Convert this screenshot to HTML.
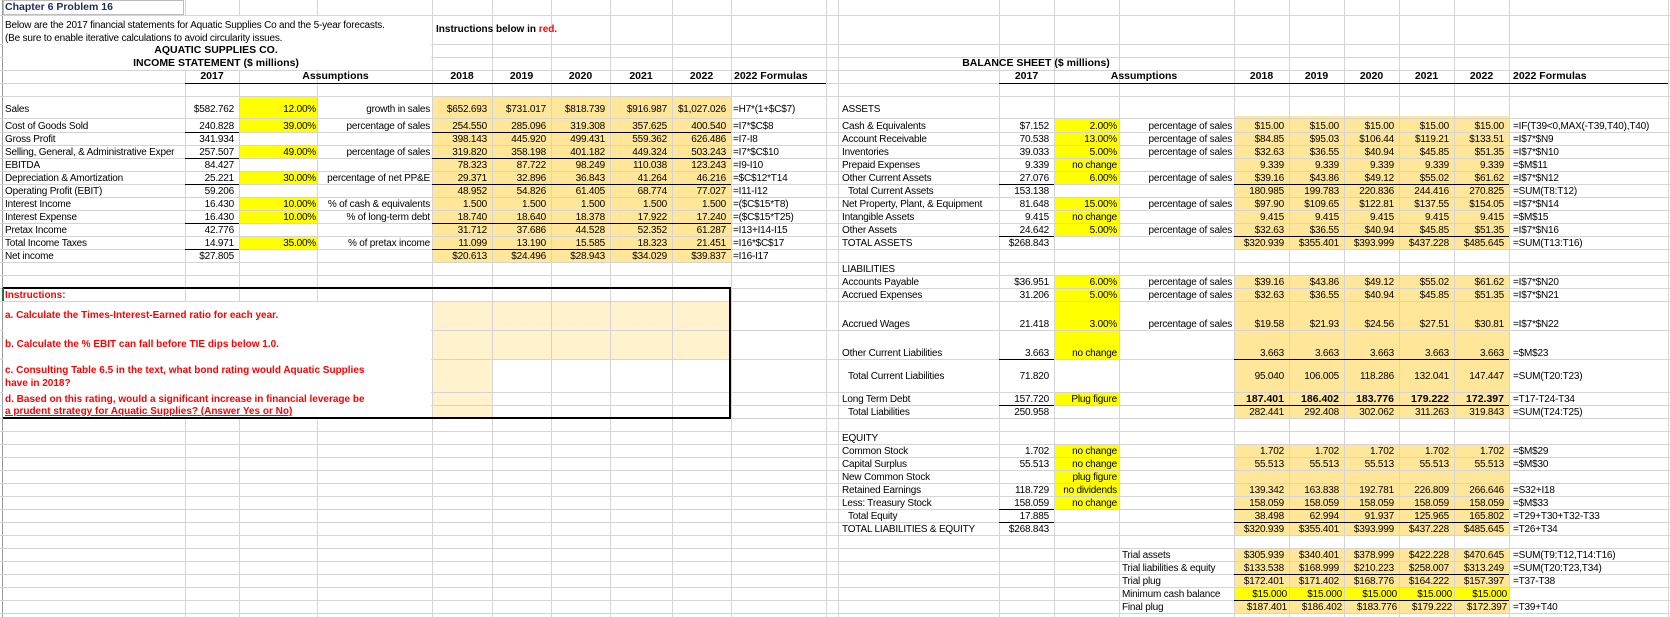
<!DOCTYPE html>
<html><head><meta charset="utf-8">
<style>
*{margin:0;padding:0;box-sizing:border-box}
body{width:1670px;height:617px;overflow:hidden;background:#fff;position:relative;font-family:"Liberation Sans",sans-serif;font-size:10px;letter-spacing:-0.2px;color:#000}
.v{position:absolute;top:0;width:1px;height:617px;background:#d4d4d4}
.h{position:absolute;left:0;width:1670px;height:1px;background:#d4d4d4}
.f{position:absolute}
.u{position:absolute;height:1px;background:#000}
.c{position:absolute;height:13px;line-height:13px;white-space:nowrap}
.b{font-weight:bold}
.hd{font-weight:bold;font-size:10.5px;letter-spacing:0}
.red{color:#f00;font-weight:bold;font-size:10px;letter-spacing:0}
.Y{background:#ffff00}.T{background:#ffe699}.L{background:#fff2cc}
</style></head><body>
<!-- fills -->
<div class="f T" style="left:432px;top:96px;width:299px;height:166px"></div>
<div class="f Y" style="left:239px;top:96px;width:78px;height:36px"></div>
<div class="f Y" style="left:239px;top:145px;width:78px;height:13px"></div>
<div class="f Y" style="left:239px;top:171px;width:78px;height:13px"></div>
<div class="f Y" style="left:239px;top:197px;width:78px;height:26px"></div>
<div class="f Y" style="left:239px;top:236px;width:78px;height:13px"></div>
<div class="f L" style="left:432px;top:301px;width:298px;height:58px"></div>
<div class="f L" style="left:432px;top:359px;width:60px;height:59px"></div>
<div class="f Y" style="left:1054px;top:118px;width:65px;height:66px"></div>
<div class="f Y" style="left:1054px;top:197px;width:65px;height:39px"></div>
<div class="f Y" style="left:1054px;top:275px;width:65px;height:84px"></div>
<div class="f Y" style="left:1054px;top:392px;width:65px;height:13px"></div>
<div class="f Y" style="left:1054px;top:444px;width:65px;height:65px"></div>
<div class="f T" style="left:1234px;top:116px;width:275px;height:133px"></div>
<div class="f T" style="left:1234px;top:275px;width:275px;height:143px"></div>
<div class="f T" style="left:1234px;top:444px;width:275px;height:91px"></div>
<div class="f T" style="left:1234px;top:548px;width:275px;height:65px"></div>
<div class="f Y" style="left:1234px;top:587px;width:275px;height:13px"></div>
<!-- vertical grid -->
<div class="v" style="left:2px;background:#9a9a9a"></div>
<div class="v" style="left:185px"></div><div class="v" style="left:239px"></div><div class="v" style="left:317px"></div>
<div class="v" style="left:432px"></div><div class="v" style="left:492px"></div><div class="v" style="left:551px"></div>
<div class="v" style="left:610px"></div><div class="v" style="left:672px"></div><div class="v" style="left:731px"></div>
<div class="v" style="left:826px"></div><div class="v" style="left:838px"></div><div class="v" style="left:999px"></div>
<div class="v" style="left:1054px"></div><div class="v" style="left:1119px"></div><div class="v" style="left:1234px"></div>
<div class="v" style="left:1289px"></div><div class="v" style="left:1344px"></div><div class="v" style="left:1399px"></div>
<div class="v" style="left:1454px"></div><div class="v" style="left:1509px"></div><div class="v" style="left:1668px"></div>
<!-- horizontal grid -->
<div class="h" style="top:15px"></div><div class="h" style="top:44px"></div><div class="h" style="top:57px"></div>
<div class="h" style="top:70px"></div><div class="h" style="top:83px"></div><div class="h" style="top:96px"></div>
<div class="h" style="top:118px"></div><div class="h" style="top:132px"></div><div class="h" style="top:145px"></div>
<div class="h" style="top:158px"></div><div class="h" style="top:171px"></div><div class="h" style="top:184px"></div>
<div class="h" style="top:197px"></div><div class="h" style="top:210px"></div><div class="h" style="top:223px"></div>
<div class="h" style="top:236px"></div><div class="h" style="top:249px"></div><div class="h" style="top:262px"></div>
<div class="h" style="top:275px"></div><div class="h" style="top:288px"></div><div class="h" style="top:301px"></div>
<div class="h" style="top:330px"></div><div class="h" style="top:359px"></div><div class="h" style="top:392px"></div>
<div class="h" style="top:405px"></div><div class="h" style="top:418px"></div><div class="h" style="top:431px"></div>
<div class="h" style="top:444px"></div><div class="h" style="top:457px"></div><div class="h" style="top:470px"></div>
<div class="h" style="top:483px"></div><div class="h" style="top:496px"></div><div class="h" style="top:509px"></div>
<div class="h" style="top:522px"></div><div class="h" style="top:535px"></div><div class="h" style="top:548px"></div>
<div class="h" style="top:561px"></div><div class="h" style="top:574px"></div><div class="h" style="top:587px"></div>
<div class="h" style="top:600px"></div><div class="h" style="top:613px"></div>
<!-- covers for overflowing text -->
<div class="f" style="left:3px;top:16px;width:428px;height:54px;background:#fff"></div>
<div class="f" style="left:3px;top:302px;width:428px;height:116px;background:#fff"></div>
<div class="f" style="left:3px;top:289px;width:181px;height:12px;background:#fff"></div>
<div class="f" style="left:3px;top:0px;width:181px;height:15px;background:#fff;border:1px solid #bbb"></div>
<!-- black underlines -->
<div class="u" style="left:185px;top:83px;width:641px"></div>
<div class="u" style="left:999px;top:83px;width:669px"></div>
<div class="u" style="left:185px;top:132px;width:54px"></div><div class="u" style="left:432px;top:132px;width:299px"></div>
<div class="u" style="left:185px;top:158px;width:54px"></div><div class="u" style="left:432px;top:158px;width:299px"></div>
<div class="u" style="left:185px;top:184px;width:54px"></div><div class="u" style="left:432px;top:184px;width:299px"></div>
<div class="u" style="left:185px;top:223px;width:54px"></div><div class="u" style="left:432px;top:223px;width:299px"></div>
<div class="u" style="left:185px;top:249px;width:54px"></div><div class="u" style="left:432px;top:249px;width:299px"></div>
<div class="u" style="left:999px;top:184px;width:55px"></div><div class="u" style="left:1234px;top:184px;width:275px"></div>
<div class="u" style="left:999px;top:236px;width:55px"></div><div class="u" style="left:1234px;top:236px;width:275px"></div>
<div class="u" style="left:999px;top:359px;width:55px"></div><div class="u" style="left:1234px;top:359px;width:275px"></div>
<div class="u" style="left:999px;top:405px;width:55px"></div><div class="u" style="left:1234px;top:405px;width:275px"></div>
<div class="u" style="left:999px;top:509px;width:55px"></div><div class="u" style="left:1234px;top:509px;width:275px"></div>
<div class="u" style="left:999px;top:522px;width:55px"></div><div class="u" style="left:1234px;top:522px;width:275px"></div>
<div class="u" style="left:1234px;top:574px;width:275px"></div><div class="u" style="left:1234px;top:600px;width:275px"></div>
<!-- instructions box -->
<div class="f" style="left:3px;top:287px;width:728px;height:132px;border:2px solid #000;border-left:none"></div>
<div class="f" style="left:2px;top:288px;width:2px;height:13px;background:#217346"></div>

<!-- titles -->
<div class="c b" style="left:5px;top:1px;color:#1f2d5a;font-size:10.5px;letter-spacing:0">Chapter 6 Problem 16</div>
<div class="c" style="left:5px;top:19px">Below are the 2017 financial statements for Aquatic Supplies Co and the 5-year forecasts.</div>
<div class="c" style="left:5px;top:32px">(Be sure to enable iterative calculations to avoid circularity issues.</div>
<div class="c b" style="left:436px;top:23px;letter-spacing:0">Instructions below in <span style="color:#f00">red.</span></div>
<div class="c hd" style="left:0;width:432px;text-align:center;top:44px">AQUATIC SUPPLIES CO.</div>
<div class="c hd" style="left:0;width:432px;text-align:center;top:57px">INCOME STATEMENT ($ millions)</div>
<div class="c hd" style="left:185px;width:54px;text-align:center;top:70px">2017</div>
<div class="c hd" style="left:239px;width:193px;text-align:center;top:70px">Assumptions</div>
<div class="c hd" style="left:432px;width:60px;text-align:center;top:70px">2018</div>
<div class="c hd" style="left:492px;width:59px;text-align:center;top:70px">2019</div>
<div class="c hd" style="left:551px;width:59px;text-align:center;top:70px">2020</div>
<div class="c hd" style="left:610px;width:62px;text-align:center;top:70px">2021</div>
<div class="c hd" style="left:672px;width:59px;text-align:center;top:70px">2022</div>
<div class="c hd" style="left:734px;top:70px">2022 Formulas</div>
<div class="c hd" style="left:838px;width:396px;text-align:center;top:57px">BALANCE SHEET ($ millions)</div>
<div class="c hd" style="left:999px;width:55px;text-align:center;top:70px">2017</div>
<div class="c hd" style="left:1054px;width:180px;text-align:center;top:70px">Assumptions</div>
<div class="c hd" style="left:1234px;width:55px;text-align:center;top:70px">2018</div>
<div class="c hd" style="left:1289px;width:55px;text-align:center;top:70px">2019</div>
<div class="c hd" style="left:1344px;width:55px;text-align:center;top:70px">2020</div>
<div class="c hd" style="left:1399px;width:55px;text-align:center;top:70px">2021</div>
<div class="c hd" style="left:1454px;width:55px;text-align:center;top:70px">2022</div>
<div class="c hd" style="left:1513px;top:70px">2022 Formulas</div>

<!-- income statement rows -->
<div class="c" style="left:5px;top:103px">Sales</div><div class="c" style="right:1436px;top:103px">$582.762</div><div class="c" style="right:1354px;top:103px">12.00%</div><div class="c" style="right:1240px;top:103px">growth in sales</div><div class="c" style="right:1183px;top:103px">$652.693</div><div class="c" style="right:1124px;top:103px">$731.017</div><div class="c" style="right:1065px;top:103px">$818.739</div><div class="c" style="right:1003px;top:103px">$916.987</div><div class="c" style="right:944px;top:103px">$1,027.026</div><div class="c" style="left:733px;top:103px">=H7*(1+$C$7)</div>
<div class="c" style="left:5px;top:120px">Cost of Goods Sold</div><div class="c" style="right:1436px;top:120px">240.828</div><div class="c" style="right:1354px;top:120px">39.00%</div><div class="c" style="right:1240px;top:120px">percentage of sales</div><div class="c" style="right:1183px;top:120px">254.550</div><div class="c" style="right:1124px;top:120px">285.096</div><div class="c" style="right:1065px;top:120px">319.308</div><div class="c" style="right:1003px;top:120px">357.625</div><div class="c" style="right:944px;top:120px">400.540</div><div class="c" style="left:733px;top:120px">=I7*$C$8</div>
<div class="c" style="left:5px;top:133px">Gross Profit</div><div class="c" style="right:1436px;top:133px">341.934</div><div class="c" style="right:1183px;top:133px">398.143</div><div class="c" style="right:1124px;top:133px">445.920</div><div class="c" style="right:1065px;top:133px">499.431</div><div class="c" style="right:1003px;top:133px">559.362</div><div class="c" style="right:944px;top:133px">626.486</div><div class="c" style="left:733px;top:133px">=I7-I8</div>
<div class="c" style="left:5px;top:146px;width:180px;overflow:hidden">Selling, General, &amp; Administrative Exper</div><div class="c" style="right:1436px;top:146px">257.507</div><div class="c" style="right:1354px;top:146px">49.00%</div><div class="c" style="right:1240px;top:146px">percentage of sales</div><div class="c" style="right:1183px;top:146px">319.820</div><div class="c" style="right:1124px;top:146px">358.198</div><div class="c" style="right:1065px;top:146px">401.182</div><div class="c" style="right:1003px;top:146px">449.324</div><div class="c" style="right:944px;top:146px">503.243</div><div class="c" style="left:733px;top:146px">=I7*$C$10</div>
<div class="c" style="left:5px;top:159px">EBITDA</div><div class="c" style="right:1436px;top:159px">84.427</div><div class="c" style="right:1183px;top:159px">78.323</div><div class="c" style="right:1124px;top:159px">87.722</div><div class="c" style="right:1065px;top:159px">98.249</div><div class="c" style="right:1003px;top:159px">110.038</div><div class="c" style="right:944px;top:159px">123.243</div><div class="c" style="left:733px;top:159px">=I9-I10</div>
<div class="c" style="left:5px;top:172px">Depreciation &amp; Amortization</div><div class="c" style="right:1436px;top:172px">25.221</div><div class="c" style="right:1354px;top:172px">30.00%</div><div class="c" style="right:1240px;top:172px">percentage of net PP&amp;E</div><div class="c" style="right:1183px;top:172px">29.371</div><div class="c" style="right:1124px;top:172px">32.896</div><div class="c" style="right:1065px;top:172px">36.843</div><div class="c" style="right:1003px;top:172px">41.264</div><div class="c" style="right:944px;top:172px">46.216</div><div class="c" style="left:733px;top:172px">=$C$12*T14</div>
<div class="c" style="left:5px;top:185px">Operating Profit (EBIT)</div><div class="c" style="right:1436px;top:185px">59.206</div><div class="c" style="right:1183px;top:185px">48.952</div><div class="c" style="right:1124px;top:185px">54.826</div><div class="c" style="right:1065px;top:185px">61.405</div><div class="c" style="right:1003px;top:185px">68.774</div><div class="c" style="right:944px;top:185px">77.027</div><div class="c" style="left:733px;top:185px">=I11-I12</div>
<div class="c" style="left:5px;top:198px">Interest Income</div><div class="c" style="right:1436px;top:198px">16.430</div><div class="c" style="right:1354px;top:198px">10.00%</div><div class="c" style="right:1240px;top:198px">% of cash &amp; equivalents</div><div class="c" style="right:1183px;top:198px">1.500</div><div class="c" style="right:1124px;top:198px">1.500</div><div class="c" style="right:1065px;top:198px">1.500</div><div class="c" style="right:1003px;top:198px">1.500</div><div class="c" style="right:944px;top:198px">1.500</div><div class="c" style="left:733px;top:198px">=($C$15*T8)</div>
<div class="c" style="left:5px;top:211px">Interest Expense</div><div class="c" style="right:1436px;top:211px">16.430</div><div class="c" style="right:1354px;top:211px">10.00%</div><div class="c" style="right:1240px;top:211px">% of long-term debt</div><div class="c" style="right:1183px;top:211px">18.740</div><div class="c" style="right:1124px;top:211px">18.640</div><div class="c" style="right:1065px;top:211px">18.378</div><div class="c" style="right:1003px;top:211px">17.922</div><div class="c" style="right:944px;top:211px">17.240</div><div class="c" style="left:733px;top:211px">=($C$15*T25)</div>
<div class="c" style="left:5px;top:224px">Pretax Income</div><div class="c" style="right:1436px;top:224px">42.776</div><div class="c" style="right:1183px;top:224px">31.712</div><div class="c" style="right:1124px;top:224px">37.686</div><div class="c" style="right:1065px;top:224px">44.528</div><div class="c" style="right:1003px;top:224px">52.352</div><div class="c" style="right:944px;top:224px">61.287</div><div class="c" style="left:733px;top:224px">=I13+I14-I15</div>
<div class="c" style="left:5px;top:237px">Total Income Taxes</div><div class="c" style="right:1436px;top:237px">14.971</div><div class="c" style="right:1354px;top:237px">35.00%</div><div class="c" style="right:1240px;top:237px">% of pretax income</div><div class="c" style="right:1183px;top:237px">11.099</div><div class="c" style="right:1124px;top:237px">13.190</div><div class="c" style="right:1065px;top:237px">15.585</div><div class="c" style="right:1003px;top:237px">18.323</div><div class="c" style="right:944px;top:237px">21.451</div><div class="c" style="left:733px;top:237px">=I16*$C$17</div>
<div class="c" style="left:5px;top:250px">Net income</div><div class="c" style="right:1436px;top:250px">$27.805</div><div class="c" style="right:1183px;top:250px">$20.613</div><div class="c" style="right:1124px;top:250px">$24.496</div><div class="c" style="right:1065px;top:250px">$28.943</div><div class="c" style="right:1003px;top:250px">$34.029</div><div class="c" style="right:944px;top:250px">$39.837</div><div class="c" style="left:733px;top:250px">=I16-I17</div>

<!-- instructions -->
<div class="c red" style="left:5px;top:289px">Instructions:</div>
<div class="c red" style="left:5px;top:309px">a. Calculate the Times-Interest-Earned ratio for each year.</div>
<div class="c red" style="left:5px;top:338px">b. Calculate the % EBIT can fall before TIE dips below 1.0.</div>
<div class="c red" style="left:5px;top:364px">c. Consulting Table 6.5 in the text, what bond rating would Aquatic Supplies</div>
<div class="c red" style="left:5px;top:377px">have in 2018?</div>
<div class="c red" style="left:5px;top:393px">d. Based on this rating, would a significant increase in financial leverage be</div>
<div class="c red" style="left:5px;top:405px;text-decoration:underline">a prudent strategy for Aquatic Supplies? (Answer Yes or No)</div>

<!-- balance sheet -->
<div class="c" style="left:842px;top:103px">ASSETS</div>
<div class="c" style="left:842px;top:120px">Cash &amp; Equivalents</div><div class="c" style="right:621px;top:120px">$7.152</div><div class="c" style="right:553px;top:120px">2.00%</div><div class="c" style="right:438px;top:120px">percentage of sales</div><div class="c" style="right:386px;top:120px">$15.00</div><div class="c" style="right:331px;top:120px">$15.00</div><div class="c" style="right:276px;top:120px">$15.00</div><div class="c" style="right:221px;top:120px">$15.00</div><div class="c" style="right:166px;top:120px">$15.00</div><div class="c" style="left:1513px;top:120px">=IF(T39&lt;0,MAX(-T39,T40),T40)</div>
<div class="c" style="left:842px;top:133px">Account Receivable</div><div class="c" style="right:621px;top:133px">70.538</div><div class="c" style="right:553px;top:133px">13.00%</div><div class="c" style="right:438px;top:133px">percentage of sales</div><div class="c" style="right:386px;top:133px">$84.85</div><div class="c" style="right:331px;top:133px">$95.03</div><div class="c" style="right:276px;top:133px">$106.44</div><div class="c" style="right:221px;top:133px">$119.21</div><div class="c" style="right:166px;top:133px">$133.51</div><div class="c" style="left:1513px;top:133px">=I$7*$N9</div>
<div class="c" style="left:842px;top:146px">Inventories</div><div class="c" style="right:621px;top:146px">39.033</div><div class="c" style="right:553px;top:146px">5.00%</div><div class="c" style="right:438px;top:146px">percentage of sales</div><div class="c" style="right:386px;top:146px">$32.63</div><div class="c" style="right:331px;top:146px">$36.55</div><div class="c" style="right:276px;top:146px">$40.94</div><div class="c" style="right:221px;top:146px">$45.85</div><div class="c" style="right:166px;top:146px">$51.35</div><div class="c" style="left:1513px;top:146px">=I$7*$N10</div>
<div class="c" style="left:842px;top:159px">Prepaid Expenses</div><div class="c" style="right:621px;top:159px">9.339</div><div class="c" style="right:553px;top:159px">no change</div><div class="c" style="right:386px;top:159px">9.339</div><div class="c" style="right:331px;top:159px">9.339</div><div class="c" style="right:276px;top:159px">9.339</div><div class="c" style="right:221px;top:159px">9.339</div><div class="c" style="right:166px;top:159px">9.339</div><div class="c" style="left:1513px;top:159px">=$M$11</div>
<div class="c" style="left:842px;top:172px">Other Current Assets</div><div class="c" style="right:621px;top:172px">27.076</div><div class="c" style="right:553px;top:172px">6.00%</div><div class="c" style="right:438px;top:172px">percentage of sales</div><div class="c" style="right:386px;top:172px">$39.16</div><div class="c" style="right:331px;top:172px">$43.86</div><div class="c" style="right:276px;top:172px">$49.12</div><div class="c" style="right:221px;top:172px">$55.02</div><div class="c" style="right:166px;top:172px">$61.62</div><div class="c" style="left:1513px;top:172px">=I$7*$N12</div>
<div class="c" style="left:848px;top:185px">Total Current Assets</div><div class="c" style="right:621px;top:185px">153.138</div><div class="c" style="right:386px;top:185px">180.985</div><div class="c" style="right:331px;top:185px">199.783</div><div class="c" style="right:276px;top:185px">220.836</div><div class="c" style="right:221px;top:185px">244.416</div><div class="c" style="right:166px;top:185px">270.825</div><div class="c" style="left:1513px;top:185px">=SUM(T8:T12)</div>
<div class="c" style="left:842px;top:198px">Net Property, Plant, &amp; Equipment</div><div class="c" style="right:621px;top:198px">81.648</div><div class="c" style="right:553px;top:198px">15.00%</div><div class="c" style="right:438px;top:198px">percentage of sales</div><div class="c" style="right:386px;top:198px">$97.90</div><div class="c" style="right:331px;top:198px">$109.65</div><div class="c" style="right:276px;top:198px">$122.81</div><div class="c" style="right:221px;top:198px">$137.55</div><div class="c" style="right:166px;top:198px">$154.05</div><div class="c" style="left:1513px;top:198px">=I$7*$N14</div>
<div class="c" style="left:842px;top:211px">Intangible Assets</div><div class="c" style="right:621px;top:211px">9.415</div><div class="c" style="right:553px;top:211px">no change</div><div class="c" style="right:386px;top:211px">9.415</div><div class="c" style="right:331px;top:211px">9.415</div><div class="c" style="right:276px;top:211px">9.415</div><div class="c" style="right:221px;top:211px">9.415</div><div class="c" style="right:166px;top:211px">9.415</div><div class="c" style="left:1513px;top:211px">=$M$15</div>
<div class="c" style="left:842px;top:224px">Other Assets</div><div class="c" style="right:621px;top:224px">24.642</div><div class="c" style="right:553px;top:224px">5.00%</div><div class="c" style="right:438px;top:224px">percentage of sales</div><div class="c" style="right:386px;top:224px">$32.63</div><div class="c" style="right:331px;top:224px">$36.55</div><div class="c" style="right:276px;top:224px">$40.94</div><div class="c" style="right:221px;top:224px">$45.85</div><div class="c" style="right:166px;top:224px">$51.35</div><div class="c" style="left:1513px;top:224px">=I$7*$N16</div>
<div class="c" style="left:842px;top:237px">TOTAL ASSETS</div><div class="c" style="right:621px;top:237px">$268.843</div><div class="c" style="right:386px;top:237px">$320.939</div><div class="c" style="right:331px;top:237px">$355.401</div><div class="c" style="right:276px;top:237px">$393.999</div><div class="c" style="right:221px;top:237px">$437.228</div><div class="c" style="right:166px;top:237px">$485.645</div><div class="c" style="left:1513px;top:237px">=SUM(T13:T16)</div>

<div class="c" style="left:842px;top:263px">LIABILITIES</div>
<div class="c" style="left:842px;top:276px">Accounts Payable</div><div class="c" style="right:621px;top:276px">$36.951</div><div class="c" style="right:553px;top:276px">6.00%</div><div class="c" style="right:438px;top:276px">percentage of sales</div><div class="c" style="right:386px;top:276px">$39.16</div><div class="c" style="right:331px;top:276px">$43.86</div><div class="c" style="right:276px;top:276px">$49.12</div><div class="c" style="right:221px;top:276px">$55.02</div><div class="c" style="right:166px;top:276px">$61.62</div><div class="c" style="left:1513px;top:276px">=I$7*$N20</div>
<div class="c" style="left:842px;top:289px">Accrued Expenses</div><div class="c" style="right:621px;top:289px">31.206</div><div class="c" style="right:553px;top:289px">5.00%</div><div class="c" style="right:438px;top:289px">percentage of sales</div><div class="c" style="right:386px;top:289px">$32.63</div><div class="c" style="right:331px;top:289px">$36.55</div><div class="c" style="right:276px;top:289px">$40.94</div><div class="c" style="right:221px;top:289px">$45.85</div><div class="c" style="right:166px;top:289px">$51.35</div><div class="c" style="left:1513px;top:289px">=I$7*$N21</div>
<div class="c" style="left:842px;top:318px">Accrued Wages</div><div class="c" style="right:621px;top:318px">21.418</div><div class="c" style="right:553px;top:318px">3.00%</div><div class="c" style="right:438px;top:318px">percentage of sales</div><div class="c" style="right:386px;top:318px">$19.58</div><div class="c" style="right:331px;top:318px">$21.93</div><div class="c" style="right:276px;top:318px">$24.56</div><div class="c" style="right:221px;top:318px">$27.51</div><div class="c" style="right:166px;top:318px">$30.81</div><div class="c" style="left:1513px;top:318px">=I$7*$N22</div>
<div class="c" style="left:842px;top:347px">Other Current Liabilities</div><div class="c" style="right:621px;top:347px">3.663</div><div class="c" style="right:553px;top:347px">no change</div><div class="c" style="right:386px;top:347px">3.663</div><div class="c" style="right:331px;top:347px">3.663</div><div class="c" style="right:276px;top:347px">3.663</div><div class="c" style="right:221px;top:347px">3.663</div><div class="c" style="right:166px;top:347px">3.663</div><div class="c" style="left:1513px;top:347px">=$M$23</div>
<div class="c" style="left:848px;top:370px">Total Current Liabilities</div><div class="c" style="right:621px;top:370px">71.820</div><div class="c" style="right:386px;top:370px">95.040</div><div class="c" style="right:331px;top:370px">106.005</div><div class="c" style="right:276px;top:370px">118.286</div><div class="c" style="right:221px;top:370px">132.041</div><div class="c" style="right:166px;top:370px">147.447</div><div class="c" style="left:1513px;top:370px">=SUM(T20:T23)</div>
<div class="c" style="left:842px;top:393px">Long Term Debt</div><div class="c" style="right:621px;top:393px">157.720</div><div class="c" style="right:553px;top:393px">Plug figure</div><div class="c b" style="right:386px;top:393px;font-size:10.5px;letter-spacing:0">187.401</div><div class="c b" style="right:331px;top:393px;font-size:10.5px;letter-spacing:0">186.402</div><div class="c b" style="right:276px;top:393px;font-size:10.5px;letter-spacing:0">183.776</div><div class="c b" style="right:221px;top:393px;font-size:10.5px;letter-spacing:0">179.222</div><div class="c b" style="right:166px;top:393px;font-size:10.5px;letter-spacing:0">172.397</div><div class="c" style="left:1513px;top:393px">=T17-T24-T34</div>
<div class="c" style="left:848px;top:406px">Total Liabilities</div><div class="c" style="right:621px;top:406px">250.958</div><div class="c" style="right:386px;top:406px">282.441</div><div class="c" style="right:331px;top:406px">292.408</div><div class="c" style="right:276px;top:406px">302.062</div><div class="c" style="right:221px;top:406px">311.263</div><div class="c" style="right:166px;top:406px">319.843</div><div class="c" style="left:1513px;top:406px">=SUM(T24:T25)</div>

<div class="c" style="left:842px;top:432px">EQUITY</div>
<div class="c" style="left:842px;top:445px">Common Stock</div><div class="c" style="right:621px;top:445px">1.702</div><div class="c" style="right:553px;top:445px">no change</div><div class="c" style="right:386px;top:445px">1.702</div><div class="c" style="right:331px;top:445px">1.702</div><div class="c" style="right:276px;top:445px">1.702</div><div class="c" style="right:221px;top:445px">1.702</div><div class="c" style="right:166px;top:445px">1.702</div><div class="c" style="left:1513px;top:445px">=$M$29</div>
<div class="c" style="left:842px;top:458px">Capital Surplus</div><div class="c" style="right:621px;top:458px">55.513</div><div class="c" style="right:553px;top:458px">no change</div><div class="c" style="right:386px;top:458px">55.513</div><div class="c" style="right:331px;top:458px">55.513</div><div class="c" style="right:276px;top:458px">55.513</div><div class="c" style="right:221px;top:458px">55.513</div><div class="c" style="right:166px;top:458px">55.513</div><div class="c" style="left:1513px;top:458px">=$M$30</div>
<div class="c" style="left:842px;top:471px">New Common Stock</div><div class="c" style="right:553px;top:471px">plug figure</div>
<div class="c" style="left:842px;top:484px">Retained Earnings</div><div class="c" style="right:621px;top:484px">118.729</div><div class="c" style="right:553px;top:484px">no dividends</div><div class="c" style="right:386px;top:484px">139.342</div><div class="c" style="right:331px;top:484px">163.838</div><div class="c" style="right:276px;top:484px">192.781</div><div class="c" style="right:221px;top:484px">226.809</div><div class="c" style="right:166px;top:484px">266.646</div><div class="c" style="left:1513px;top:484px">=S32+I18</div>
<div class="c" style="left:842px;top:497px">Less: Treasury Stock</div><div class="c" style="right:621px;top:497px">158.059</div><div class="c" style="right:553px;top:497px">no change</div><div class="c" style="right:386px;top:497px">158.059</div><div class="c" style="right:331px;top:497px">158.059</div><div class="c" style="right:276px;top:497px">158.059</div><div class="c" style="right:221px;top:497px">158.059</div><div class="c" style="right:166px;top:497px">158.059</div><div class="c" style="left:1513px;top:497px">=$M$33</div>
<div class="c" style="left:848px;top:510px">Total Equity</div><div class="c" style="right:621px;top:510px">17.885</div><div class="c" style="right:386px;top:510px">38.498</div><div class="c" style="right:331px;top:510px">62.994</div><div class="c" style="right:276px;top:510px">91.937</div><div class="c" style="right:221px;top:510px">125.965</div><div class="c" style="right:166px;top:510px">165.802</div><div class="c" style="left:1513px;top:510px">=T29+T30+T32-T33</div>
<div class="c" style="left:842px;top:523px">TOTAL LIABILITIES &amp; EQUITY</div><div class="c" style="right:621px;top:523px">$268.843</div><div class="c" style="right:386px;top:523px">$320.939</div><div class="c" style="right:331px;top:523px">$355.401</div><div class="c" style="right:276px;top:523px">$393.999</div><div class="c" style="right:221px;top:523px">$437.228</div><div class="c" style="right:166px;top:523px">$485.645</div><div class="c" style="left:1513px;top:523px">=T26+T34</div>

<div class="c" style="left:1122px;top:549px">Trial assets</div><div class="c" style="right:386px;top:549px">$305.939</div><div class="c" style="right:331px;top:549px">$340.401</div><div class="c" style="right:276px;top:549px">$378.999</div><div class="c" style="right:221px;top:549px">$422.228</div><div class="c" style="right:166px;top:549px">$470.645</div><div class="c" style="left:1513px;top:549px">=SUM(T9:T12,T14:T16)</div>
<div class="c" style="left:1122px;top:562px">Trial liabilities &amp; equity</div><div class="c" style="right:386px;top:562px">$133.538</div><div class="c" style="right:331px;top:562px">$168.999</div><div class="c" style="right:276px;top:562px">$210.223</div><div class="c" style="right:221px;top:562px">$258.007</div><div class="c" style="right:166px;top:562px">$313.249</div><div class="c" style="left:1513px;top:562px">=SUM(T20:T23,T34)</div>
<div class="c" style="left:1122px;top:575px">Trial plug</div><div class="c" style="right:386px;top:575px">$172.401</div><div class="c" style="right:331px;top:575px">$171.402</div><div class="c" style="right:276px;top:575px">$168.776</div><div class="c" style="right:221px;top:575px">$164.222</div><div class="c" style="right:166px;top:575px">$157.397</div><div class="c" style="left:1513px;top:575px">=T37-T38</div>
<div class="c" style="left:1122px;top:588px">Minimum cash balance</div><div class="c" style="right:383px;top:588px">$15.000</div><div class="c" style="right:328px;top:588px">$15.000</div><div class="c" style="right:273px;top:588px">$15.000</div><div class="c" style="right:218px;top:588px">$15.000</div><div class="c" style="right:163px;top:588px">$15.000</div>
<div class="c" style="left:1122px;top:601px">Final plug</div><div class="c" style="right:383px;top:601px">$187.401</div><div class="c" style="right:328px;top:601px">$186.402</div><div class="c" style="right:273px;top:601px">$183.776</div><div class="c" style="right:218px;top:601px">$179.222</div><div class="c" style="right:163px;top:601px">$172.397</div><div class="c" style="left:1513px;top:601px">=T39+T40</div>
</body></html>
